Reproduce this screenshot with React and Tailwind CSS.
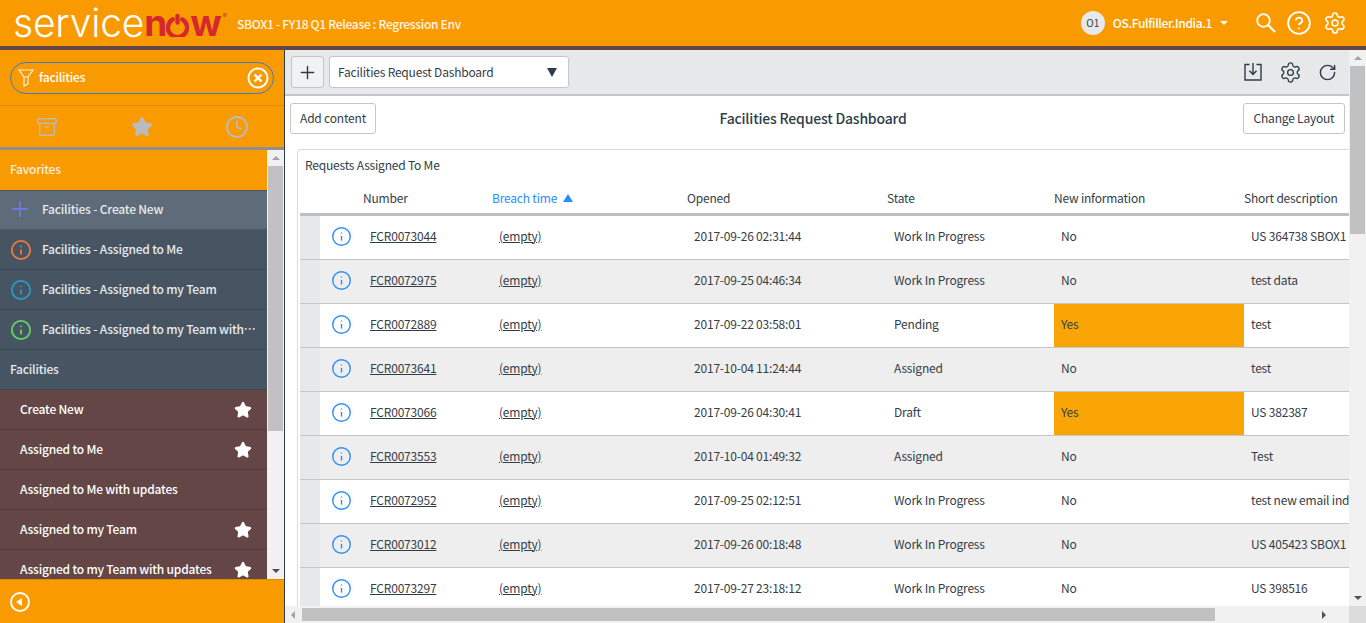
import { Archive, CircleHelp, Clock, Info, Plus, RotateCw, Settings, Star } from 'lucide-react';

const favorites = [
  { label: 'Facilities - Assigned to Me', color: '#ee7c3f' },
  { label: 'Facilities - Assigned to my Team', color: '#2b9cc4' },
  { label: 'Facilities - Assigned to my Team with updates', color: '#5fd868' },
];

const modules = [
  { label: 'Create New', star: true },
  { label: 'Assigned to Me', star: true },
  { label: 'Assigned to Me with updates', star: false },
  { label: 'Assigned to my Team', star: true },
  { label: 'Assigned to my Team with updates', star: true },
];

const rows = [
  ['FCR0073044', '2017-09-26 02:31:44', 'Work In Progress', 'No', 'US 364738 SBOX1'],
  ['FCR0072975', '2017-09-25 04:46:34', 'Work In Progress', 'No', 'test data'],
  ['FCR0072889', '2017-09-22 03:58:01', 'Pending', 'Yes', 'test'],
  ['FCR0073641', '2017-10-04 11:24:44', 'Assigned', 'No', 'test'],
  ['FCR0073066', '2017-09-26 04:30:41', 'Draft', 'Yes', 'US 382387'],
  ['FCR0073553', '2017-10-04 01:49:32', 'Assigned', 'No', 'Test'],
  ['FCR0072952', '2017-09-25 02:12:51', 'Work In Progress', 'No', 'test new email ind'],
  ['FCR0073012', '2017-09-26 00:18:48', 'Work In Progress', 'No', 'US 405423 SBOX1'],
  ['FCR0073297', '2017-09-27 23:18:12', 'Work In Progress', 'No', 'US 398516'],
];

function Logo() {
  return (
    <div className="flex items-center w-[224px] -ml-[2px] shrink-0 h-[42px] font-['Inter',sans-serif] text-[39px] leading-[42px]">
      <span className="font-light text-white">service</span>
      <span className="font-bold text-[#d4282e] flex items-center text-[37px] tracking-[-2px] whitespace-nowrap">
        n
        <svg viewBox="0 0 24 24" className="w-[23px] h-[23px] mt-[5px] mx-[1px]" fill="none" stroke="#d4282e" strokeWidth="4.5" strokeLinecap="round">
          <path d="M7 5.500a10 10 0 1 0 10 0" />
          <path d="M12 2v7" />
        </svg>
        w
      </span>
      <span className="self-start mt-[10px] ml-[3px] text-[6px] leading-[8px] tracking-normal font-bold text-[#d4282e]">®</span>
    </div>
  );
}

function Funnel() {
  return (
    <svg viewBox="0 0 16 18" className="w-[16px] h-[18px]" fill="none" stroke="#f4f1ea" strokeWidth="1.2">
      <path d="M1 1h14l-5 7H6z" />
      <path d="M6 8v9l4-2V8" />
    </svg>
  );
}

function TrayIn() {
  return (
    <svg viewBox="0 0 18 18" className="w-[18px] h-[18px]" fill="none" stroke="#2e3d49" strokeWidth="1.4">
      <path d="M5.500 1.500H1v15.500h16V1.500h-4.500" />
      <path d="M9 0v11M5.500 7.800 9 11.500l3.500-3.700" />
    </svg>
  );
}

function SearchGlass() {
  return (
    <svg viewBox="0 0 20 20" className="w-[20px] h-[20px] ml-[28px]" fill="none" stroke="#fff" strokeWidth="1.800">
      <circle cx="7.500" cy="7.500" r="6.300" />
      <path d="M12 12l7 7" strokeWidth="2.200" />
    </svg>
  );
}

export default function App() {
  return (
    <div className="h-[623px] w-[1366px] overflow-hidden flex flex-col bg-white font-['Noto_Sans_CJK_SC','Open_Sans',sans-serif] text-[12px] tracking-[-0.2px] text-[#343d47]">
      <header className="h-[50px] shrink-0 bg-[#f99b00] border-b-[4px] border-[#644646] flex items-center pl-[15px] pr-[19px]">
        <Logo />
        <span className="text-[#fff5e6] leading-none font-medium pt-[2px] tracking-[-0.3px]">SBOX1 - FY18 Q1 Release : Regression Env</span>
        <div className="ml-auto flex items-center">
          <div className="w-[24px] h-[24px] rounded-full bg-[#e6e8ea] flex items-center justify-center text-[10px] tracking-normal leading-none">O1</div>
          <span className="ml-[8px] text-white font-medium leading-none tracking-[-0.35px]">OS.Fulfiller.India.1</span>
          <span className="ml-[8px] w-0 h-0 border-x-[4px] border-x-transparent border-t-[4px] border-t-white" />
          <SearchGlass />
          <CircleHelp size={26} color="#fff" strokeWidth={1.7} className="ml-[10px]" />
          <Settings size={24} color="#fff" strokeWidth={1.6} className="ml-[11px]" />
        </div>
      </header>

      <div className="flex-1 min-h-0 flex">
        <aside className="w-[285px] shrink-0 border-r border-[#2e3d49] flex flex-col bg-[#f99b00]">
          <div className="h-[56px] shrink-0 border-b border-[#d98a0a] flex items-center px-[10px]">
            <div className="w-[264px] h-[32px] rounded-full border border-[#3b7fc4] flex items-center pl-[7px] pr-[4px]">
              <Funnel />
              <span className="ml-[5px] pb-[2px] text-white font-medium leading-none">facilities</span>
              <svg viewBox="0 0 22 22" className="ml-auto w-[22px] h-[22px]" fill="none" stroke="#fff">
                <circle cx="11" cy="11" r="9.500" strokeWidth="2" />
                <path d="M7.500 7.500l7 7M14.500 7.500l-7 7" strokeWidth="2.400" />
              </svg>
            </div>
          </div>
          <div className="h-[41px] shrink-0 border-b-[3px] border-[#8f8f8c] box-content flex items-center">
            <div className="flex-1 flex justify-center"><Archive size={22} color="#b9bcbe" strokeWidth={1.5} /></div>
            <div className="flex-1 flex justify-center"><Star size={22} color="#b9bcbe" fill="#b9bcbe" /></div>
            <div className="flex-1 flex justify-center"><Clock size={24} color="#b9bcbe" strokeWidth={1.8} /></div>
          </div>
          <div className="h-[429px] shrink-0 flex">
            <nav className="w-[267px] overflow-hidden">
              <div className="h-[40px] flex items-center pl-[10px] pb-[2px] text-[#f7ede0] font-medium">Favorites</div>
              <div className="h-[40px] flex items-center bg-[#5e6c79] border-y border-[#4a5865] pb-[2px] text-[#e8e9eb] font-medium">
                <Plus size={24} color="#6f78e0" strokeWidth={1.8} className="ml-[8px] mr-[10px]" />
                Facilities - Create New
              </div>
              {favorites.map((f) => (
                <div key={f.label} className="h-[40px] flex items-center bg-[#475563] border-b border-[#3a4754] text-[#e8e9eb] font-medium">
                  <Info size={22} color={f.color} strokeWidth={1.9} className="ml-[10px] mr-[10px] shrink-0" />
                  <span className="truncate w-[214px] pb-[2px]">{f.label}</span>
                </div>
              ))}
              <div className="h-[40px] flex items-center pl-[10px] pb-[2px] bg-[#475563] border-b border-[#3a4754] text-[#e8e9eb] font-medium">Facilities</div>
              {modules.map((m) => (
                <div key={m.label} className="h-[40px] flex items-center justify-between pl-[20px] pr-[15px] bg-[#644646] border-b border-[#563a3a] text-white font-medium">
                  <span className="pb-[2px]">{m.label}</span>
                  {m.star && <Star size={18} color="#fff" fill="#fff" />}
                </div>
              ))}
            </nav>
            <div className="w-[17px] bg-[#f1f1f1] flex flex-col items-center">
              <span className="mt-[6px] w-0 h-0 border-x-[4px] border-x-transparent border-b-[4px] border-b-[#a3a3a3]" />
              <div className="mt-[6px] w-[15px] h-[265px] bg-[#c1c1c1]" />
              <span className="mt-auto mb-[6px] w-0 h-0 border-x-[4px] border-x-transparent border-t-[4px] border-t-[#505050]" />
            </div>
          </div>
          <div className="flex-1 border-t border-[#d98a0a] flex items-center pl-[10px]">
            <div className="w-[20px] h-[20px] rounded-full border-2 border-white flex items-center justify-center">
              <span className="w-0 h-0 border-y-[4px] border-y-transparent border-r-[6px] border-r-white mr-[2px]" />
            </div>
          </div>
        </aside>

        <main className="flex-1 min-w-0 flex flex-col">
          <div className="flex-1 min-h-0 flex">
            <div className="w-[1064px] shrink-0 overflow-hidden">
              <div className="h-[46px] bg-[#e6e8ea] border-b-2 border-[#c4c7ca] flex items-center pl-[6px] pr-[12px]">
                <div className="w-[33px] h-[32px] rounded-[3px] border border-[#c4c7ca] bg-[#f0f2f4] flex items-center justify-center">
                  <Plus size={21} color="#2e3d49" strokeWidth={1.6} />
                </div>
                <div className="ml-[5px] w-[240px] h-[32px] rounded-[3px] border border-[#c4c7ca] bg-white flex items-center justify-between pl-[8px] pr-[11px]">
                  Facilities Request Dashboard
                  <span className="w-0 h-0 border-x-[5px] border-x-transparent border-t-[9px] border-t-[#2e3d49]" />
                </div>
                <div className="ml-auto flex items-center gap-[17px]">
                  <TrayIn />
                  <Settings size={23} color="#2e3d49" strokeWidth={1.4} />
                  <RotateCw size={19} color="#2e3d49" strokeWidth={1.8} className="-ml-[1px]" />
                </div>
              </div>
              <div className="flex items-center justify-between h-[31px] mt-[7px] pl-[5px] pr-[4px]">
                <div className="w-[86px] h-[31px] pb-[2px] rounded-[3px] border border-[#c4c7ca] flex items-center justify-center">Add content</div>
                <h1 className="text-[14px] tracking-[-0.2px] font-medium leading-none text-[#2e3d49] pl-[7px] pb-[2px]">Facilities Request Dashboard</h1>
                <div className="w-[102px] h-[31px] pb-[2px] rounded-[3px] border border-[#c4c7ca] flex items-center justify-center">Change Layout</div>
              </div>
              <section className="mt-[15px] ml-[12px] rounded-tl-[4px] border border-[#dadada] border-r-0 pl-[2px] pt-[5px]">
                <h2 className="pl-[5px] h-[20px] leading-[20px] text-[#2e3d49]">Requests Assigned To Me</h2>
                <div className="grid grid-cols-[43px_129px_195px_200px_167px_190px_105px] pl-[20px] h-[38px] items-center border-b-[3px] border-[#bdbfc1] mt-[3px] pt-[5px] whitespace-nowrap">
                  <span />
                  <span>Number</span>
                  <span className="flex items-center gap-[6px] text-[#278efc]">
                    Breach time
                    <span className="w-0 h-0 border-x-[5px] border-x-transparent border-b-[8px] border-b-[#278efc]" />
                  </span>
                  <span>Opened</span>
                  <span>State</span>
                  <span>New information</span>
                  <span>Short description</span>
                </div>
                {rows.map((r, i) => (
                  <div key={r[0]} className={`grid grid-cols-[20px_43px_129px_195px_200px_167px_190px_105px] h-[44px] border-b border-[#c4c6c8] ${i % 2 ? 'bg-[#eeeeee]' : 'bg-white'}`}>
                    <span className="bg-[#e6e8ea]" />
                    <span className="flex items-center pl-[11px] pb-[3px]"><Info size={21} color="#278efc" strokeWidth={1.6} /></span>
                    <span className="flex items-center pl-[7px] pb-[4px] underline">{r[0]}</span>
                    <span className="flex items-center pl-[7px] pb-[4px] underline">(empty)</span>
                    <span className="flex items-center pl-[7px] pb-[4px]">{r[1]}</span>
                    <span className="flex items-center pl-[7px] pb-[4px]">{r[2]}</span>
                    <span className={`flex items-center pl-[7px] pb-[4px] ${r[3] === 'Yes' ? 'bg-[#f9a505]' : ''}`}>{r[3]}</span>
                    <span className="flex items-center pl-[7px] pb-[4px] whitespace-nowrap overflow-hidden">{r[4]}</span>
                  </div>
                ))}
              </section>
            </div>
            <div className="w-[17px] bg-[#f1f1f1] flex flex-col items-center">
              <span className="mt-[6px] w-0 h-0 border-x-[4px] border-x-transparent border-b-[4px] border-b-[#a3a3a3]" />
              <div className="mt-[6px] w-[15px] h-[168px] bg-[#c1c1c1]" />
              <span className="mt-auto mb-[6px] w-0 h-0 border-x-[4px] border-x-transparent border-t-[4px] border-t-[#505050]" />
            </div>
          </div>
          <div className="h-[17px] shrink-0 bg-[#f1f1f1] flex items-center">
            <span className="ml-[6px] w-0 h-0 border-y-[4px] border-y-transparent border-r-[4px] border-r-[#a3a3a3]" />
            <div className="ml-[7px] w-[913px] h-[13px] bg-[#c1c1c1]" />
            <span className="ml-auto mr-[23px] w-0 h-0 border-y-[4px] border-y-transparent border-l-[4px] border-l-[#505050]" />
            <div className="w-[17px] h-[17px] bg-[#dcdcdc]" />
          </div>
        </main>
      </div>
    </div>
  );
}
